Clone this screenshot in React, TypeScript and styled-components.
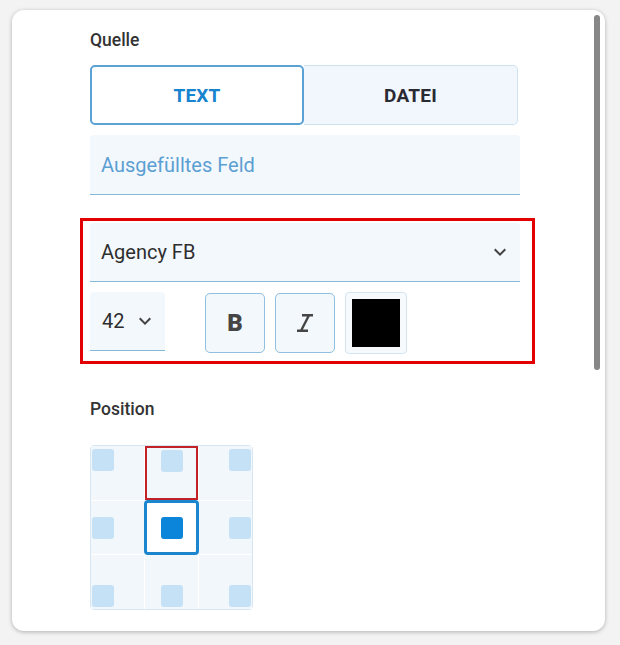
import React from "react";
import styled, { createGlobalStyle, css } from "styled-components";

const GlobalStyle = createGlobalStyle`
  html, body { margin: 0; padding: 0; background: #f3f3f3; }
  body { font-family: Roboto, "Noto Sans", Arial, sans-serif; }
  * { box-sizing: border-box; }
`;

const Page = styled.div`
  width: 620px;
  height: 645px;
  padding: 10px 0 0 12px;
`;

const Card = styled.div`
  position: relative;
  width: 593px;
  height: 621px;
  background: #ffffff;
  border-radius: 12px;
  box-shadow: 0 1px 4px rgba(0, 0, 0, 0.28);
  padding: 20px 0 0 78px;
  overflow: hidden;
`;

const ScrollThumb = styled.div`
  position: absolute;
  top: 5px;
  right: 5px;
  width: 6px;
  height: 355px;
  border-radius: 3px;
  background: #878787;
`;

const Column = styled.div`
  width: 430px;
  display: flex;
  flex-direction: column;
`;

const Label = styled.div<{ $mt?: number }>`
  font-size: 17.5px;
  font-weight: 500;
  line-height: 20px;
  height: 20px;
  color: #333333;
  margin-top: ${(p) => p.$mt ?? 0}px;
`;

const Toggle = styled.div`
  margin-top: 15px;
  width: 428px;
  height: 60px;
  display: grid;
  grid-template-columns: 214px 214px;
`;

const ToggleButton = styled.div<{ $active?: boolean }>`
  display: flex;
  align-items: center;
  justify-content: center;
  font-size: 19px;
  font-weight: 700;
  letter-spacing: 0.2px;
  ${(p) =>
    p.$active
      ? css`
          background: #ffffff;
          border: 2px solid #5aa2d4;
          border-radius: 5px;
          color: #1684cf;
        `
      : css`
          background: #f1f7fc;
          border: 1px solid #cfe2f0;
          border-left: none;
          border-radius: 0 5px 5px 0;
          color: #2a2a33;
        `}
`;

const FilledField = styled.div`
  margin-top: 10px;
  height: 60px;
  background: #f3f8fc;
  border-bottom: 1px solid #86b8d8;
  border-radius: 4px 4px 0 0;
  padding-left: 11px;
  display: flex;
  align-items: center;
  font-size: 20px;
  color: #5c9fd2;
`;

const Highlight = styled.div`
  margin-top: 23px;
  margin-left: -10px;
  width: 455px;
  border: 3px solid #e30000;
  padding: 2px 12px 7px 7px;
`;

const Select = styled.div`
  height: 59px;
  background: #f3f8fc;
  border-bottom: 1px solid #86b8d8;
  border-radius: 4px 4px 0 0;
  padding: 0 8px 0 11px;
  display: flex;
  align-items: center;
  justify-content: space-between;
  font-size: 20px;
  color: #2e2e2e;
`;

const StyleRow = styled.div`
  margin-top: 10px;
  display: flex;
  align-items: flex-start;
`;

const SizeSelect = styled.div`
  width: 75px;
  height: 59px;
  background: #f3f8fc;
  border-bottom: 1px solid #86b8d8;
  border-radius: 4px 4px 0 0;
  padding-left: 12px;
  display: flex;
  align-items: center;
  gap: 9px;
  font-size: 20px;
  color: #2e2e2e;
`;

const IconButton = styled.div<{ $ml: number }>`
  margin-left: ${(p) => p.$ml}px;
  margin-top: 1px;
  width: 60px;
  height: 60px;
  border: 1px solid #8fc0e0;
  border-radius: 5px;
  background: #f3f8fc;
  display: flex;
  align-items: center;
  justify-content: center;
`;

const BoldGlyph = styled.span`
  font-family: Roboto, Arial, sans-serif;
  font-weight: 900;
  font-size: 24px;
  line-height: 1;
  color: #454545;
`;

const Swatch = styled.div`
  margin-left: 10px;
  width: 62px;
  height: 62px;
  border: 1px solid #d3e5f2;
  border-radius: 4px;
  background: #f6fafd;
  padding: 6px;
`;

const SwatchColor = styled.div<{ $color: string }>`
  width: 48px;
  height: 48px;
  background: ${(p) => p.$color};
`;

const PositionGrid = styled.div`
  margin-top: 26px;
  width: 163px;
  height: 165px;
  border: 1px solid #d6e7f3;
  border-radius: 4px;
  background: #ffffff;
  display: grid;
  grid-template-columns: repeat(3, 1fr);
  grid-template-rows: repeat(3, 1fr);
  gap: 1px;
`;

const alignMap = ["flex-start", "center", "flex-end"];

const Cell = styled.div<{ $row: number; $col: number; $state?: "selected" | "hover" }>`
  display: flex;
  align-items: ${(p) => alignMap[p.$row]};
  justify-content: ${(p) => alignMap[p.$col]};
  padding: 3px 1px 2px 1px;
  background: #f2f7fc;
  ${(p) =>
    p.$state === "selected" &&
    css`
      background: #ffffff;
      border: 3px solid #1b86ce;
      border-radius: 4px;
      margin: -1px;
      align-items: center;
      justify-content: center;
    `}
  ${(p) =>
    p.$state === "hover" &&
    css`
      border: 2px solid #c22128;
      padding: 2px;
    `}
`;

const Marker = styled.div<{ $active?: boolean }>`
  width: 22px;
  height: 22px;
  border-radius: 3px;
  background: ${(p) => (p.$active ? "#0a85d9" : "#c4e1f5")};
`;

const Chevron = () => (
  <svg width="24" height="24" viewBox="0 0 24 24" aria-hidden="true">
    <path d="M16.59 8.59L12 13.17 7.41 8.59 6 10l6 6 6-6z" fill="#444" />
  </svg>
);

const ItalicIcon = () => (
  <svg width="16" height="18" viewBox="0 0 16 18" aria-hidden="true">
    <path
      d="M5 1.2H16 M0 16.8H11 M12 1.2L4 16.8"
      stroke="#454545"
      strokeWidth="2.4"
      fill="none"
    />
  </svg>
);

export default function App() {
  const cells = [0, 1, 2].flatMap((r) => [0, 1, 2].map((c) => ({ r, c })));
  return (
    <>
      <GlobalStyle />
      <Page>
        <Card>
          <ScrollThumb />
          <Column>
            <Label>Quelle</Label>
            <Toggle>
              <ToggleButton $active>TEXT</ToggleButton>
              <ToggleButton>DATEI</ToggleButton>
            </Toggle>
            <FilledField>Ausgefülltes Feld</FilledField>
            <Highlight>
              <Select>
                <span>Agency FB</span>
                <Chevron />
              </Select>
              <StyleRow>
                <SizeSelect>
                  <span>42</span>
                  <Chevron />
                </SizeSelect>
                <IconButton $ml={40}>
                  <BoldGlyph>B</BoldGlyph>
                </IconButton>
                <IconButton $ml={10}>
                  <ItalicIcon />
                </IconButton>
                <Swatch>
                  <SwatchColor $color="#000000" />
                </Swatch>
              </StyleRow>
            </Highlight>
            <Label $mt={35}>Position</Label>
            <PositionGrid>
              {cells.map(({ r, c }) => {
                const state =
                  r === 1 && c === 1 ? "selected" : r === 0 && c === 1 ? "hover" : undefined;
                return (
                  <Cell key={`${r}-${c}`} $row={r} $col={c} $state={state}>
                    <Marker $active={state === "selected"} />
                  </Cell>
                );
              })}
            </PositionGrid>
          </Column>
        </Card>
      </Page>
    </>
  );
}
